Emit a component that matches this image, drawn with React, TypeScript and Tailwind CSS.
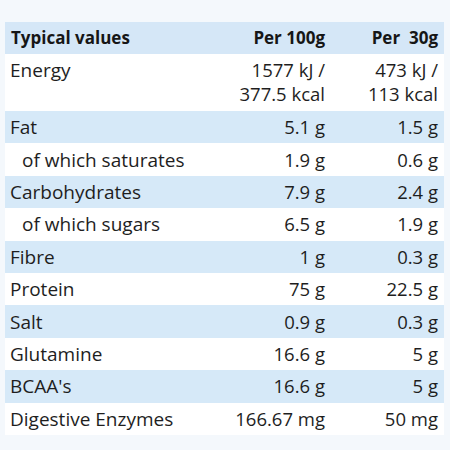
import React from 'react'

interface Row {
  label: string
  per100: string[]
  per30: string[]
  sub?: boolean
  shaded?: boolean
}

const rows: Row[] = [
  { label: 'Energy', per100: ['1577 kJ /', '377.5 kcal'], per30: ['473 kJ /', '113 kcal'] },
  { label: 'Fat', per100: ['5.1 g'], per30: ['1.5 g'], shaded: true },
  { label: 'of which saturates', per100: ['1.9 g'], per30: ['0.6 g'], sub: true },
  { label: 'Carbohydrates', per100: ['7.9 g'], per30: ['2.4 g'], shaded: true },
  { label: 'of which sugars', per100: ['6.5 g'], per30: ['1.9 g'], sub: true },
  { label: 'Fibre', per100: ['1 g'], per30: ['0.3 g'], shaded: true },
  { label: 'Protein', per100: ['75 g'], per30: ['22.5 g'] },
  { label: 'Salt', per100: ['0.9 g'], per30: ['0.3 g'], shaded: true },
  { label: 'Glutamine', per100: ['16.6 g'], per30: ['5 g'] },
  { label: "BCAA's", per100: ['16.6 g'], per30: ['5 g'], shaded: true },
  { label: 'Digestive Enzymes', per100: ['166.67 mg'], per30: ['50 mg'] },
]

export default function App() {
  return (
    <div
      className="w-[450px] h-[450px] bg-[#f4f8fc] pt-[22px] pl-[5px] pr-[6px] text-[#1e1e1e]"
      style={{ fontFamily: '"Open Sans", "Noto Sans", sans-serif' }}
    >
      <div className="bg-white">
        <div className="grid grid-cols-[1fr_140px_113px] h-[32px] items-center bg-[#d5e7f7] font-bold text-[17px] text-[#161616]">
          <div className="pl-[6px]">Typical values</div>
          <div className="text-right pr-[6px]">Per 100g</div>
          <div className="text-right pr-[6px]">Per&nbsp; 30g</div>
        </div>
        {rows.map((r) => (
          <div
            key={r.label}
            className={
              'grid grid-cols-[1fr_140px_113px] text-[18.5px] leading-[24px] ' +
              (r.per100.length > 1 ? 'h-[57px] pt-[4px] ' : 'h-[32.4px] items-center ') +
              (r.shaded ? 'bg-[#d6e9f8]' : 'bg-white')
            }
          >
            <div className={r.sub ? 'pl-[17px] text-[19px]' : 'pl-[5px] text-[19px]'}>{r.label}</div>
            <div className="text-right pr-[6px] whitespace-nowrap">
              {r.per100.map((v) => (
                <div key={v}>{v}</div>
              ))}
            </div>
            <div className="text-right pr-[6px] whitespace-nowrap">
              {r.per30.map((v) => (
                <div key={v}>{v}</div>
              ))}
            </div>
          </div>
        ))}
      </div>
    </div>
  )
}
